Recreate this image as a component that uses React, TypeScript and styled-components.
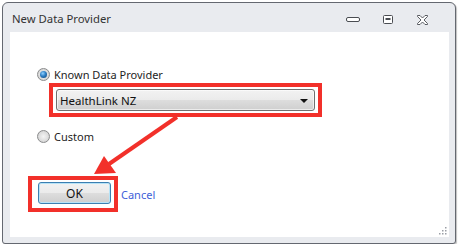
import styled, { createGlobalStyle } from 'styled-components';

const GlobalStyle = createGlobalStyle`
  html, body {
    margin: 0;
    padding: 0;
    background: #ffffff;
  }
  body {
    font-family: 'Noto Sans', 'DejaVu Sans', sans-serif;
    font-size: 11px;
    color: #1e1e1e;
  }
`;

const RED = '#f2302a';

export default function App() {
  return (
    <>
      <GlobalStyle />
      <Window>
        <TitleBar>
          <Title>New Data Provider</Title>
          <Controls>
            <ControlButton aria-label='minimize'>
              <svg width='14' height='5' viewBox='0 0 14 5'>
                <rect x='0.5' y='0.5' width='13' height='4' rx='1.5' fill='#fff' stroke='#4a4d52' />
              </svg>
            </ControlButton>
            <ControlButton aria-label='maximize'>
              <svg width='10' height='9' viewBox='0 0 10 9'>
                <rect x='0.5' y='0.5' width='9' height='8' rx='1' fill='#fff' stroke='#4a4d52' />
                <rect x='2.5' y='3' width='5' height='2' fill='#4a4d52' />
              </svg>
            </ControlButton>
            <ControlButton aria-label='close'>
              <svg width='11' height='10' viewBox='0 0 11 10'>
                <path
                  d='M0.5 0.5 H3 L5.5 3 L8 0.5 H10.5 V1.5 L7 5 L10.5 8.5 V9.5 H8 L5.5 7 L3 9.5 H0.5 V8.5 L4 5 L0.5 1.5 Z'
                  fill='#fff'
                  stroke='#4a4d52'
                  strokeWidth='0.9'
                  strokeLinejoin='round'
                />
              </svg>
            </ControlButton>
          </Controls>
        </TitleBar>
        <Content>
          <Form>
            <RadioRow>
              <Radio $checked />
              <Label>Known Data Provider</Label>
            </RadioRow>
            <Highlight $mode='combo'>
              <Combo>
                <ComboText>HealthLink NZ</ComboText>
                <ComboArrow />
              </Combo>
            </Highlight>
            <RadioRow $top={13}>
              <Radio />
              <Label>Custom</Label>
            </RadioRow>
            <ButtonRow>
              <Highlight $mode='button'>
                <OkButton>OK</OkButton>
              </Highlight>
              <CancelLink>Cancel</CancelLink>
            </ButtonRow>
          </Form>
          <Annotation width='439' height='205' viewBox='0 0 439 205'>
            <line x1='167' y1='85' x2='99' y2='132' stroke={RED} strokeWidth='4' />
            <polygon points='84,142 94,124 106,141' fill={RED} />
          </Annotation>
          <Grip width='9' height='9' viewBox='0 0 9 9'>
            {[
              [7, 1],
              [4, 4],
              [7, 4],
              [1, 7],
              [4, 7],
              [7, 7],
            ].map(([x, y]) => (
              <rect key={`${x}-${y}`} x={x} y={y} width='1.5' height='1.5' fill='#9a9ea5' />
            ))}
          </Grip>
        </Content>
      </Window>
    </>
  );
}

const Window = styled.div`
  box-sizing: border-box;
  margin: 2px 0 0 2px;
  width: 454px;
  height: 242px;
  border: 1px solid #646870;
  border-radius: 6px 6px 3px 3px;
  background: #e9ebef;
  padding: 0 6px 6px 7px;
  display: flex;
  flex-direction: column;
  box-shadow: 1px 1px 1px rgba(0, 0, 0, 0.25);
`;

const TitleBar = styled.div`
  height: 29px;
  display: flex;
  align-items: center;
  justify-content: space-between;
`;

const Title = styled.span`
  font-size: 11.3px;
  color: #333;
  margin-left: 2px;
  margin-top: 1px;
`;

const Controls = styled.div`
  display: flex;
  align-items: center;
  margin-right: 9px;
  margin-top: 4px;
`;

const ControlButton = styled.span`
  width: 35px;
  height: 14px;
  display: flex;
  align-items: center;
  justify-content: center;
`;

const Content = styled.div`
  position: relative;
  flex: 1;
  background: #ffffff;
`;

const Form = styled.div`
  display: flex;
  flex-direction: column;
  align-items: flex-start;
  padding: 36px 0 0 27px;
`;

const RadioRow = styled.div<{ $top?: number }>`
  display: flex;
  align-items: center;
  gap: 4px;
  height: 13px;
  margin-top: ${p => p.$top ?? 0}px;
`;

const Radio = styled.span<{ $checked?: boolean }>`
  box-sizing: border-box;
  width: 13px;
  height: 13px;
  border-radius: 50%;
  border: 1px solid #8a8b8c;
  background: radial-gradient(circle at 50% 50%, #f4f4f4 0%, #dcdcdc 60%, #c8c8c8 100%);
  display: flex;
  align-items: center;
  justify-content: center;
  &::after {
    content: '';
    display: ${p => (p.$checked ? 'block' : 'none')};
    width: 7px;
    height: 7px;
    border-radius: 50%;
    background: radial-gradient(circle at 40% 35%, #8fd0ff 0%, #2d7ec4 45%, #0f3f70 100%);
  }
`;

const Label = styled.span`
  font-size: 11px;
  line-height: 13px;
  color: #1e1e1e;
`;

const Highlight = styled.div<{ $mode: 'combo' | 'button' }>`
  display: inline-flex;
  border: 4px solid ${RED};
  padding: ${p => (p.$mode === 'combo' ? '2px 3px' : '2px 3px 4px 6px')};
  margin-top: ${p => (p.$mode === 'combo' ? '2px' : '0')};
  margin-left: ${p => (p.$mode === 'combo' ? '12px' : '-9px')};
`;

const Combo = styled.div`
  box-sizing: border-box;
  width: 259px;
  height: 22px;
  border: 1px solid #707070;
  border-radius: 3px;
  background: linear-gradient(#f2f2f2 0%, #ebebeb 48%, #dddddd 52%, #cfcfcf 100%);
  box-shadow: inset 0 0 0 1px rgba(255, 255, 255, 0.6);
  display: flex;
  align-items: center;
  justify-content: space-between;
  padding: 0 6px 0 3px;
`;

const ComboText = styled.span`
  font-size: 11.5px;
  color: #111;
`;

const ComboArrow = styled.span`
  width: 0;
  height: 0;
  border-left: 4px solid transparent;
  border-right: 4px solid transparent;
  border-top: 4px solid #111;
  margin-top: 1px;
`;

const ButtonRow = styled.div`
  display: flex;
  align-items: center;
  gap: 3px;
  margin-top: 33px;
`;

const OkButton = styled.button`
  box-sizing: border-box;
  width: 73px;
  height: 22px;
  border: 1px solid #3c7fb1;
  border-radius: 3px;
  background: linear-gradient(#f2f2f2 0%, #ebebeb 48%, #dddddd 52%, #cfcfcf 100%);
  box-shadow: inset 0 0 0 1px #b7e3f7;
  font-family: inherit;
  font-size: 12px;
  color: #111;
  padding: 0;
`;

const CancelLink = styled.a`
  font-size: 11px;
  color: #4160d8;
  cursor: pointer;
`;

const Annotation = styled.svg`
  position: absolute;
  left: 0;
  top: 0;
  pointer-events: none;
`;

const Grip = styled.svg`
  position: absolute;
  right: 2px;
  bottom: 2px;
`;
